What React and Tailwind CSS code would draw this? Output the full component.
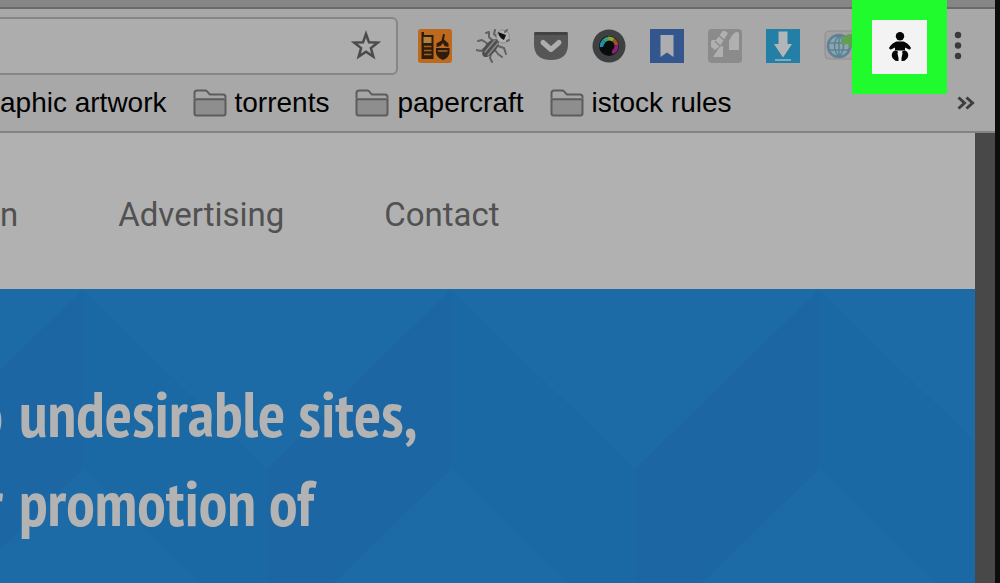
import React from 'react';

const folders = ['torrents', 'papercraft', 'istock rules'];

const links = ['n', 'Advertising', 'Contact'];

const heroLines = [
  { lead: 'o', text: 'undesirable sites,' },
  { lead: 'r', text: 'promotion of' },
];

const FolderIcon = () => (
  <svg viewBox="0 0 34 28" className="w-[34px] h-7 shrink-0" fill="none" stroke="#5c5c5c" strokeWidth="2">
    <path d="M1.500 9V4q0-2.500 2.500-2.500h8q1.500 0 2.300 1l1.700 2.200q.6.800 1.600.8H30q2.500 0 2.500 2.500V9" fill="#a6a6a6" />
    <path d="M1.500 10.200h31V24.500q0 2-2 2h-27q-2 0-2-2z" fill="#8e8e8e" />
  </svg>
);

const NotesIcon = () => (
  <svg viewBox="0 0 34 34" className="size-[34px]">
    <rect width="34" height="34" rx="3" fill="#bd6a1e" />
    <g fill="#2e1c0d">
      <path d="M3.500 3H6v3h9.500v24h-12z" />
      <path d="M23.500 11.500 25 5l2 .5-1 5 4.500 4V18l-4-1-1.500-3-2.500 3-4 1v-3.500z" />
      <path d="M18 19h13.500v5q-1 5-6.500 7-6-2-7-7z" />
    </g>
    <path d="M5.500 8h8v6h-8z" fill="#b3813a" />
    <path d="M6 17.500h7.500M6 21.500h7.500M6 25.500h7.500M20 22h9.500" stroke="#a5601f" strokeWidth="1.500" />
  </svg>
);

const BugIcon = () => (
  <svg viewBox="0 0 34 34" className="size-[34px]" fill="none" strokeLinecap="round" strokeLinejoin="round">
    <path d="m16 11-3-3V3l-3 1M21 8l-3-3 1-4M12 15l-6-4-4 1M9 19l-4 3-5-1M22 17l6 2 2 6M19 21l3 4 4 3M15 25l-1 4 2 4" stroke="#626262" strokeWidth="2" />
    <ellipse cx="14.500" cy="19" rx="11" ry="5.500" transform="rotate(-48 14.500 19)" fill="#4e4e4e" />
    <path d="m9 23 10-12M12 26l10-12" stroke="#8a8a8a" strokeWidth="1.500" />
    <circle cx="27" cy="7.500" r="6.500" fill="#b2b2b2" stroke="#8c8c8c" />
    <path d="m22 3 8 3-2 5q-5-2-6-8z" fill="#111" />
    <path d="m29 3 2-2M31 12l2-1" stroke="#666" strokeWidth="2" />
  </svg>
);

const PocketIcon = () => (
  <svg viewBox="0 0 34 34" className="size-[34px]">
    <path d="M1 3h32q1 0 1 1v11q0 16-17 16T0 15V4q0-1 1-1z" fill="#565656" />
    <path d="M1 3h32v3H1z" fill="#424242" />
    <path d="m9 13.500 8 7 8-7" fill="none" stroke="#adadad" strokeWidth="5" strokeLinecap="round" strokeLinejoin="round" />
  </svg>
);

const LensIcon = () => (
  <svg viewBox="0 0 34 34" className="size-[34px]" fill="none">
    <circle cx="17" cy="17" r="16.500" fill="#3f4042" />
    <circle cx="17" cy="17" r="10" fill="#0c0c0c" />
    <g strokeWidth="4">
      <path d="M9.800 18a7.500 7.500 0 0 1 2.200-6" stroke="#1f8fa8" />
      <path d="M12 12a7.500 7.500 0 0 1 5-2.500" stroke="#35a07a" />
      <path d="M16.500 9.500a7.500 7.500 0 0 1 5 1.500" stroke="#8ba53a" />
      <path d="M21.500 11a7.500 7.500 0 0 1 3 5" stroke="#a0522a" />
      <path d="M24.500 16a7.500 7.500 0 0 1-4.500 7.500" stroke="#8a1f78" />
    </g>
    <circle cx="16" cy="19" r="5" fill="#0b0b0b" />
  </svg>
);

const BookmarkIcon = () => (
  <svg viewBox="0 0 34 34" className="size-[34px]">
    <path d="M0 0h34v34H0z" fill="#34568f" />
    <path d="M10.500 6h13v22L17 23.500 10.500 28z" fill="#adadb0" />
  </svg>
);

const MosaicIcon = () => (
  <svg viewBox="0 0 34 34" className="size-[34px]">
    <rect width="34" height="34" rx="4" fill="#8b8b8b" />
    <g fill="#b0b0b0">
      <path d="M3 13q0-2 2-2h3l6-8q1-2 3-1l3 2-8 13-5 4-4-3z" />
      <path d="M21 12q4-9 8-9 2 0 2 2v16H21zM5 28l6-9q1-2 4-2v11z" />
    </g>
    <path d="m10 6 6 5M7 12l5 5" stroke="#8b8b8b" strokeWidth="1.500" />
  </svg>
);

const DownloadIcon = () => (
  <svg viewBox="0 0 34 34" className="size-[34px]">
    <path d="M0 0h34v34H0z" fill="#237fa5" />
    <path d="M12.500 2.500h9V15H26l-9 13.500L8 15h4.500z" fill="#b2b6b8" />
    <path d="M9 31h16" stroke="#7fa9b8" strokeWidth="2" />
  </svg>
);

const GlobeIcon = () => (
  <svg viewBox="0 0 34 34" className="size-[34px]" fill="none">
    <rect x="1" y="2" width="32" height="28" rx="4" fill="#a5a1a3" stroke="#918d8f" />
    <circle cx="15" cy="17" r="11" fill="#8fa5ae" stroke="#5b8296" strokeWidth="2.500" />
    <path d="M4 14h22M5 21h20M15 6v22M15 6q-9 11 0 22M15 6q9 11 0 22" stroke="#5b8296" strokeWidth="1.500" />
    <path d="m17 10 7-5 10 1v12l-8 1-2-4-6 1z" fill="#62a04f" />
  </svg>
);

const BabyIcon = () => (
  <svg viewBox="0 0 22 30" className="w-[22px] h-[30px]" fill="#050505">
    <circle cx="11" cy="4.200" r="4.200" />
    <path d="M7.500 9.500h7q4.500 1.500 7.300 6 .2 2.500-1.800 2l-4-2v3H6v-3l-4 2q-2 .5-1.800-2 2.800-4.500 7.300-6z" />
    <path d="M6 18.500 9 19.500l-.5 2L9.500 26v3q-3 .5-4.500-1.500Q2 25 3 21.500q.8-2.500 3-3z" />
    <path d="M16 18.500 13 19.500l.5 2L12.500 26v3q3 .5 4.500-1.500 3-2.500 2-6-.8-2.500-3-3z" />
  </svg>
);

const extensions = [
  { name: 'Notes', icon: <NotesIcon /> },
  { name: 'Bug finder', icon: <BugIcon /> },
  { name: 'Pocket', icon: <PocketIcon /> },
  { name: 'Color picker', icon: <LensIcon /> },
  { name: 'Bookmarks', icon: <BookmarkIcon /> },
  { name: 'Mosaic', icon: <MosaicIcon /> },
  { name: 'Downloader', icon: <DownloadIcon /> },
  { name: 'Translate', icon: <GlobeIcon /> },
];

const Toolbar = () => (
  <div className="flex items-center pt-2 pr-[21px]">
    <div className="flex flex-1 min-w-0 items-center h-[58px] pr-3 border-2 border-l-0 border-[#868686] rounded-r-md bg-[#adadad]">
      <input aria-label="Address" className="flex-1 min-w-0 h-full bg-transparent outline-none" />
      <button aria-label="Bookmark this page">
        <svg viewBox="0 0 34 34" className="size-[34px]" fill="none" stroke="#4b4b4b" strokeWidth="2.500">
          <path d="m16 5 3 8.300 8.800.3-6.900 5.500 2.400 8.500L16 22.700l-7.300 4.900 2.400-8.500-6.900-5.500 8.800-.3z" />
        </svg>
      </button>
    </div>
    <div className="flex items-center gap-6 ml-5">
      {extensions.map((ext) => (
        <button key={ext.name} aria-label={ext.name}>{ext.icon}</button>
      ))}
      {/* Highlighted extension */}
      <div className="relative size-[34px]">
        <button
          aria-label="Baby"
          className="absolute -top-[29px] -left-[30px] flex items-center justify-center w-[95px] h-[94px] border-20 border-[#1ffb2c] bg-[#f3f3f3]"
        >
          <BabyIcon />
        </button>
      </div>
      <button aria-label="Menu">
        <svg viewBox="0 0 34 34" className="size-[34px]" fill="#3a3a3a">
          <circle cx="18" cy="6" r="3.200" />
          <circle cx="18" cy="16.500" r="3.200" />
          <circle cx="18" cy="27" r="3.200" />
        </svg>
      </button>
    </div>
  </div>
);

const BookmarksBar = () => (
  <div className="flex items-center h-14 pr-5 font-['Liberation_Sans',sans-serif] text-[28px] text-black whitespace-nowrap">
    <div className="flex flex-1 items-center gap-[26px]">
      <button>aphic artwork</button>
      {folders.map((name) => (
        <button key={name} className="flex items-center gap-2">
          <FolderIcon />
          {name}
        </button>
      ))}
    </div>
    <button aria-label="More bookmarks">
      <svg viewBox="0 0 18 14" className="w-[18px] h-3.5" fill="none" stroke="#3d3d3d" strokeWidth="3">
        <path d="m1.500 1.500 6 5.500-6 5.500M9.500 1.500l6 5.500-6 5.500" />
      </svg>
    </button>
  </div>
);

const HeroPattern = () => (
  <svg className="absolute inset-0 size-full">
    <defs>
      <pattern id="chevrons" x="-101" y="0" width="368" height="360" patternUnits="userSpaceOnUse">
        <path d="M0 180 184 0v180L0 360z" fill="#1b66a3" />
        <path d="M184 0 368 180v180L184 180z" fill="#1a68a4" />
      </pattern>
    </defs>
    <rect width="100%" height="100%" fill="url(#chevrons)" />
  </svg>
);

const App = () => {
  return (
    <div className="flex flex-col h-screen overflow-hidden border-r-[5px] border-[#0d0d0d] bg-[#484848]">
      {/* Browser chrome */}
      <header className="border-t-7 border-[#868686] bg-[#a8a8a8]">
        <div className="border-t-2 border-b-2 border-t-[#6a6a6a] border-b-[#838383]">
          <Toolbar />
          <BookmarksBar />
        </div>
      </header>

      {/* Page */}
      <div className="flex flex-col flex-1 min-h-0 mr-5 bg-[#b1b1b1]">
        <nav className="flex items-center gap-[100px] h-[156px] shrink-0 pt-2 font-['Roboto',sans-serif] text-[33px] text-[#515151]">
          {links.map((link) => (
            <a key={link} href="#">{link}</a>
          ))}
        </nav>
        <main className="relative flex-1 overflow-hidden bg-[#1c6ba7] pt-20">
          <HeroPattern />
          <h1 className="relative font-['PT_Sans_Narrow','Open_Sans_Condensed','Liberation_Sans',sans-serif] text-[64px] leading-[89px] font-bold text-[#b3b3b3] whitespace-nowrap">
            {heroLines.map((line) => (
              <span key={line.lead} className="flex gap-4">
                <span className="flex justify-end w-[3px]">{line.lead}</span>
                <span>{line.text}</span>
              </span>
            ))}
          </h1>
        </main>
      </div>
    </div>
  );
};

export default App;
